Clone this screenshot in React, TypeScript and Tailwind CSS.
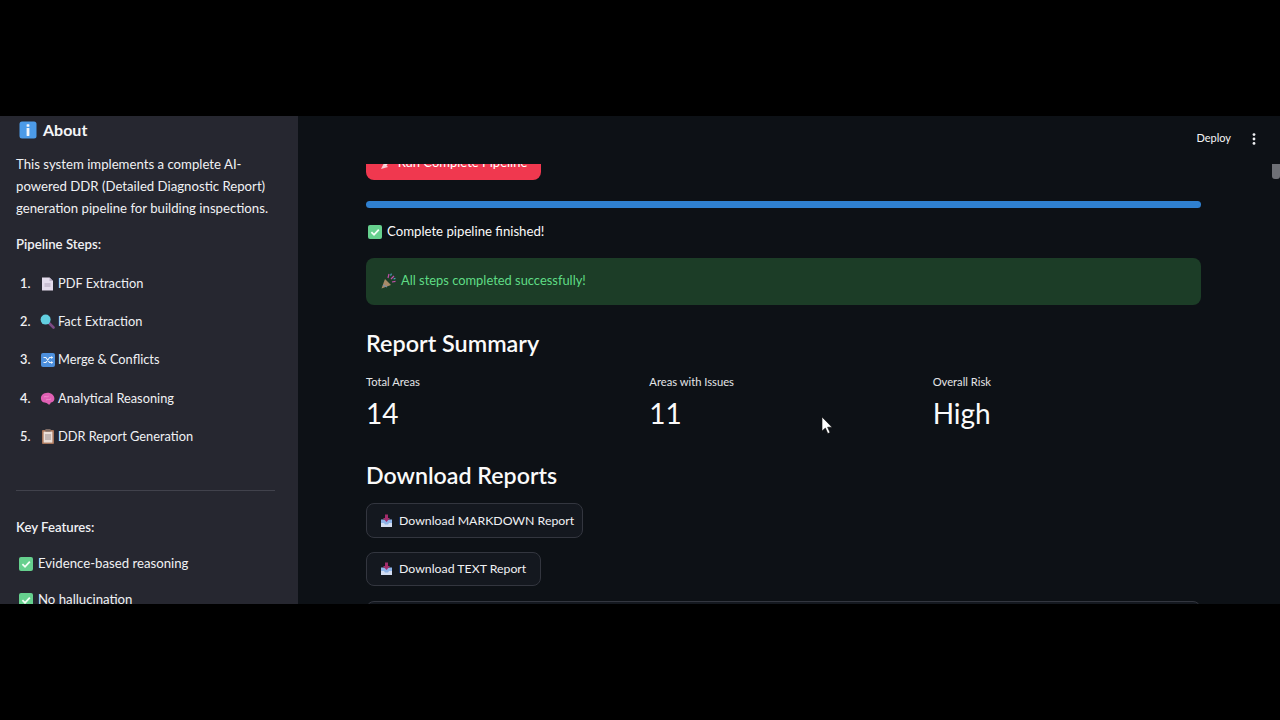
function InfoIcon() {
  return (
    <svg width="18" height="18" viewBox="0 0 18 18" className="shrink-0">
      <rect x="0.5" y="0.5" width="17" height="17" rx="2.5" fill="#4c9be8" />
      <rect x="7.6" y="3.2" width="2.8" height="2.6" rx="0.6" fill="#f2f6fb" />
      <rect x="7.6" y="7" width="2.8" height="8" rx="0.4" fill="#f2f6fb" />
    </svg>
  );
}

function CheckIcon() {
  return (
    <svg width="14" height="14" viewBox="0 0 14 14" className="shrink-0">
      <rect x="0" y="0" width="14" height="14" rx="2" fill="#66d08e" />
      <path d="M3.4 7.2 L6 9.8 L10.8 4.6" stroke="#f2fff6" strokeWidth="1.8" fill="none" />
    </svg>
  );
}

function DocIcon() {
  return (
    <svg width="13" height="14" viewBox="0 0 13 14">
      <path d="M1 0.5 H8.5 L12 4 V13.5 H1 Z" fill="#e4dcec" />
      <path d="M8.5 0.5 L12 4 H8.5 Z" fill="#bdb2c8" />
      <path d="M3.5 7 H9.5 M3.5 9 H9.5" stroke="#a89bb4" strokeWidth="0.9" />
    </svg>
  );
}

function SearchIcon() {
  return (
    <svg width="15" height="15" viewBox="0 0 15 15">
      <path d="M9 9 L13.5 13.5" stroke="#7d4a84" strokeWidth="2.6" strokeLinecap="round" />
      <circle cx="5.6" cy="5.6" r="5" fill="#62cfe0" />
    </svg>
  );
}

function ShuffleIcon() {
  return (
    <svg width="14" height="14" viewBox="0 0 14 14">
      <rect width="14" height="14" rx="2" fill="#4c8fdc" />
      <path d="M2.5 4.5 H4.8 L8.6 9.5 H11 M2.5 9.5 H4.8 L8.6 4.5 H11" stroke="#eef5fd" strokeWidth="1.1" fill="none" />
      <path d="M10.2 3 L12.2 4.5 L10.2 6 Z M10.2 8 L12.2 9.5 L10.2 11 Z" fill="#eef5fd" />
    </svg>
  );
}

function BrainIcon() {
  return (
    <svg width="15" height="14" viewBox="0 0 15 14">
      <path d="M1 7 C0.4 3.6 3.6 0.8 7.4 0.8 C11.4 0.8 14.6 3.4 14.4 7 C14.2 9.4 12.6 10.4 10.8 10.4 C10.4 12 9.4 13 8.2 12.2 C7 11.2 6 10.4 4.6 10.4 C2.6 10.4 1.3 9.2 1 7 Z" fill="#e060b4" />
      <path d="M4 5 C5.4 3.8 7 5.6 8.6 4.2 M6 8 C7.6 7 9.4 8.4 11 6.8" stroke="#f090cc" strokeWidth="0.9" fill="none" />
    </svg>
  );
}

function ClipboardIcon() {
  return (
    <svg width="12" height="15" viewBox="0 0 12 15">
      <rect x="0" y="1" width="12" height="14" rx="1" fill="#a8755a" />
      <rect x="1.6" y="2.6" width="8.8" height="11" fill="#ecdfd8" />
      <rect x="3.4" y="0" width="5.2" height="2.6" fill="#7c6a64" />
      <path d="M3 6 H9 M3 8 H9 M3 10 H9" stroke="#8f8489" strokeWidth="0.9" />
    </svg>
  );
}

function InboxIcon() {
  return (
    <svg width="13" height="14" viewBox="0 0 13 14" className="shrink-0">
      <path d="M1 5.5 H12 V13 H1 Z" fill="#8fb4e8" />
      <path d="M1 9 H4 L5 10.5 H8 L9 9 H12 V13 H1 Z" fill="#d3ddf2" />
      <path d="M5 0.5 H8 V4 H10 L6.5 8 L3 4 H5 Z" fill="#a32c6c" />
    </svg>
  );
}

function PartyIcon() {
  return (
    <svg width="15" height="16" viewBox="0 0 15 16">
      <path d="M0.5 15.5 L4 6 L10 12 Z" fill="#a78a68" />
      <path d="M2 12 L6 14" stroke="#7a8ea8" strokeWidth="1.2" />
      <path d="M7 5 L8 1 M10 6 L13 3 M11 9 L14.5 8.4" stroke="#c04fa8" strokeWidth="1.2" />
      <path d="M9.6 2.6 L10.4 0.6 M12.6 6 L14.4 5.4" stroke="#4fa8c8" strokeWidth="1.2" />
    </svg>
  );
}

function RocketIcon() {
  return (
    <svg width="12" height="14" viewBox="0 0 12 14" className="shrink-0">
      <path d="M1 13 L4 7 L8 11 Z" fill="#f7c9d2" />
      <path d="M4 8 L10 1 L11 4 L6 10 Z" fill="#fbe6ea" />
    </svg>
  );
}

const steps = [
  { label: "PDF Extraction", icon: <DocIcon />, cls: "h-[19px]" },
  { label: "Fact Extraction", icon: <SearchIcon />, cls: "mt-[19px] h-[19px]" },
  { label: "Merge & Conflicts", icon: <ShuffleIcon />, cls: "mt-[19px] h-[19px]" },
  { label: "Analytical Reasoning", icon: <BrainIcon />, cls: "mt-[20px] h-[19px]" },
  { label: "DDR Report Generation", icon: <ClipboardIcon />, cls: "mt-[19px] h-[19px]" },
];

function Sidebar() {
  return (
    <aside className="w-[298px] shrink-0 h-full overflow-hidden bg-[#262730] pl-[16px] pr-[20px] text-[#f0f1f4] text-[13.2px]">
      <div className="flex items-center h-[18px] mt-[5px] pl-[3px] gap-[6px]">
        <InfoIcon />
        <span className="text-[16px] font-bold text-[#f5f6f8]">About</span>
      </div>
      <p className="mt-[14px] leading-[22px] whitespace-nowrap">
        This system implements a complete AI-
        <br />
        powered DDR (Detailed Diagnostic Report)
        <br />
        generation pipeline for building inspections.
      </p>
      <p className="mt-[14px] leading-[22px] font-semibold">Pipeline Steps:</p>
      <ol className="mt-[19px] text-[12.8px]">
        {steps.map((s, i) => (
          <li key={s.label} className={"flex items-center " + s.cls}>
            <span className="w-[22px] pl-[4px] shrink-0 font-semibold">{i + 1}.</span>
            <span className="w-[20px] shrink-0 flex justify-center pr-[1px]">{s.icon}</span>
            <span>{s.label}</span>
          </li>
        ))}
      </ol>
      <hr className="mt-[44px] mr-[3px] border-t border-[#41424c]" />
      <p className="mt-[25px] leading-[22px] font-semibold">Key Features:</p>
      <div className="mt-[16px] flex items-center gap-[5px] h-[20px] pl-[3px]">
        <CheckIcon />
        <span>Evidence-based reasoning</span>
      </div>
      <div className="mt-[16px] flex items-center gap-[5px] h-[20px] pl-[3px]">
        <CheckIcon />
        <span>No hallucination</span>
      </div>
    </aside>
  );
}

function Metric({ label, value }: { label: string; value: string }) {
  return (
    <div>
      <div className="text-[11.2px] leading-[16px] text-[#e4e5e8]">{label}</div>
      <div className="mt-[3px] text-[28px] leading-[40px] text-[#fafafa]">{value}</div>
    </div>
  );
}

function DownloadButton({ label, w, cls }: { label: string; w: string; cls: string }) {
  return (
    <button className={"flex items-center gap-[6px] pl-[13px] whitespace-nowrap rounded-lg border border-[#33363f] bg-[#14181f] text-[12.3px] text-[#f0f1f4] " + w + " " + cls}>
      <InboxIcon />
      {label}
    </button>
  );
}

function Main() {
  return (
    <main className="flex-1 min-w-0 h-full flex flex-col bg-[#0d1116] relative">
      <header className="h-[48px] shrink-0 flex items-center justify-end pr-[24px] pb-[3px] gap-[21px] text-[#f4f5f7]">
        <span className="text-[11px]">Deploy</span>
        <svg width="4" height="12" viewBox="0 0 4 12">
          <circle cx="2" cy="1.6" r="1.4" fill="#f0f1f4" />
          <circle cx="2" cy="6" r="1.4" fill="#f0f1f4" />
          <circle cx="2" cy="10.4" r="1.4" fill="#f0f1f4" />
        </svg>
      </header>
      <div className="flex-1 min-h-0 overflow-hidden pl-[68px] pr-[79px]">
        <button className="w-[175px] h-[40px] -mt-[24px] pt-[5px] flex items-center justify-center gap-[6px] rounded-lg bg-[#f0384f] text-white text-[13px] whitespace-nowrap">
          <RocketIcon />
          Run Complete Pipeline
        </button>
        <div className="mt-[21px] h-[7px] rounded-full bg-[#2f80d0]" />
        <div className="mt-[14px] flex items-center gap-[5px] h-[20px] pl-[2px] text-[13.2px] text-[#fafafa]">
          <CheckIcon />
          <span>Complete pipeline finished!</span>
        </div>
        <div className="mt-[16px] h-[47px] rounded-lg bg-[#1c3d27] flex items-center gap-[5px] pl-[15px] pb-[1px] text-[12.9px] text-[#5fdc85]">
          <PartyIcon />
          <span>All steps completed successfully!</span>
        </div>
        <h2 className="mt-[21px] text-[23.4px] leading-[34px] font-semibold text-[#fafafa]">Report Summary</h2>
        <div className="mt-[14px] grid grid-cols-3 gap-x-[15px]">
          <Metric label="Total Areas" value="14" />
          <Metric label="Areas with Issues" value="11" />
          <Metric label="Overall Risk" value="High" />
        </div>
        <h2 className="mt-[25px] text-[23.2px] leading-[34px] font-semibold text-[#fafafa]">Download Reports</h2>
        <DownloadButton label="Download MARKDOWN Report" w="w-[217px]" cls="mt-[11px] h-[35px] pt-[1px]" />
        <DownloadButton label="Download TEXT Report" w="w-[175px]" cls="mt-[14px] h-[34px]" />
        <div className="mt-[15px] h-[30px] rounded-lg border border-[#33363f] bg-[#14181f]" />
      </div>
      {/* scrollbar thumb */}
      <div className="absolute top-[48px] right-0 w-[8px] h-[15px] rounded-b-[3px] bg-[#6e7076]" />
    </main>
  );
}

export default function App() {
  return (
    <div className="w-[1280px] h-[720px] bg-black overflow-hidden relative pt-[116px]" style={{ fontFamily: 'Lato, "Open Sans", sans-serif' }}>
      <div className="h-[488px] flex overflow-hidden">
        <Sidebar />
        <Main />
      </div>
      {/* mouse cursor from the recording */}
      <svg width="13" height="19" viewBox="0 0 13 19" className="absolute left-[821px] top-[416px]">
        <path d="M1 1 V15 L4.4 12 L6.8 17.6 L9 16.6 L6.6 11.2 H11 Z" fill="#fff" stroke="#111" strokeWidth="0.6" />
      </svg>
    </div>
  );
}
